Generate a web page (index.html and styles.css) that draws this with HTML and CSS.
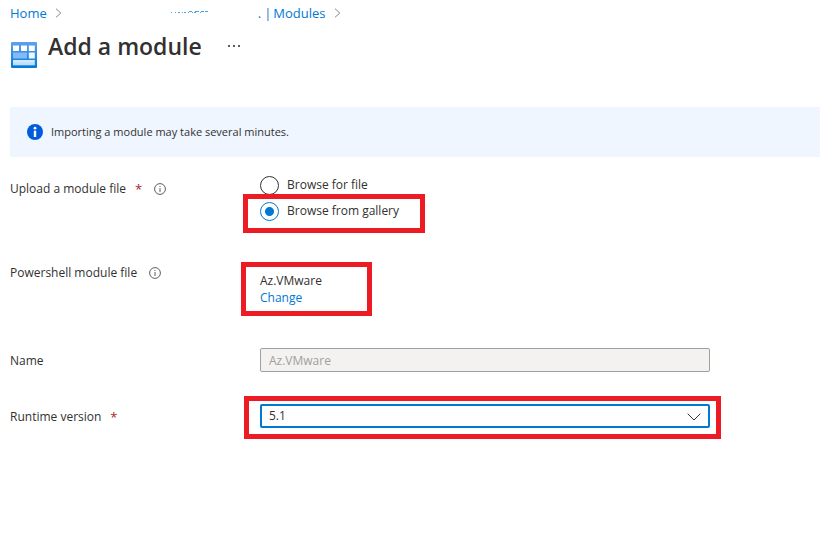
FILE: index.html
```html
<!DOCTYPE html>
<html lang="en">
<head>
<meta charset="utf-8">
<title>Add a module</title>
<link rel="stylesheet" href="styles.css">
</head>
<body>
<nav class="breadcrumb" aria-label="Breadcrumb">
  <a href="#">Home</a>
  <svg class="sep" viewBox="0 0 8 10" aria-hidden="true"><path d="M1 .7 5.8 5 1 9.3"/></svg>
  <a class="account" href="#">
    <svg class="redacted" viewBox="0 0 40 4" aria-hidden="true"><path d="M1 1.500h1M5 1.500h1M8 1.500h2M12 1.500h1M14 1.500h2M19 .5h3M18 1.500h1M22 1.500h1M25 .5h4M24 1.500h2M31 .5h3M30 1.500h1M35 .5h3"/></svg>
    <span>.</span><span class="bar">|</span><span>Modules</span>
  </a>
  <svg class="sep" viewBox="0 0 8 10" aria-hidden="true"><path d="M1 .7 5.8 5 1 9.3"/></svg>
</nav>
<header class="title">
  <svg class="title-icon" viewBox="0 0 26 26" aria-hidden="true">
    <defs><linearGradient id="tile" x1="0" y1="0" x2="0" y2="1"><stop offset="0" stop-color="#5ea0ef"/><stop offset="1" stop-color="#0078d4"/></linearGradient>
    <linearGradient id="pane" x1="0" y1="0" x2="0" y2="1"><stop offset="0" stop-color="#d2ebff"/><stop offset="1" stop-color="#b5dcfa"/></linearGradient></defs>
    <rect width="26" height="26" rx="1" fill="url(#tile)"/>
    <path fill="#fff" d="M2 3.500h6v5.500h-6zM10 3.500h6v5.500h-6zM17.800 3.500h6v5.500h-6z"/>
    <path fill="#83b9f9" d="M2 10.500h14v6h-14z"/>
    <path fill="#f0f8ff" d="M17.800 10.500h6v6h-6z"/>
    <path fill="url(#pane)" d="M2 18h21.800v5.300h-21.800z"/>
  </svg>
  <h1>Add a module</h1>
  <button class="more" type="button" aria-label="More"><svg viewBox="0 0 12 2" aria-hidden="true"><path d="M0 0h2v2H0zM5 0h2v2H5zM10 0h2v2h-2z"/></svg></button>
</header>
<main>
  <div class="banner" role="status">
    <svg viewBox="0 0 16 16" aria-hidden="true"><circle cx="8" cy="8" r="8" fill="#015cda"/><circle cx="8" cy="4.200" r="1.400" fill="#fff"/><path fill="#fff" d="M6.800 6.700h2.400v6.300H6.800z"/></svg>
    <span>Importing a module may take several minutes.</span>
  </div>
  <form>
    <div class="row tall" role="radiogroup" aria-labelledby="upload">
      <div class="label lowered"><span id="upload">Upload a module file</span><span class="required">*</span>
        <svg class="info" viewBox="0 0 12 12" aria-hidden="true"><circle cx="6" cy="6" r="5.400"/><path d="M6 5v4M6 3v1"/></svg></div>
      <div class="field">
        <label class="radio"><input type="radio" name="source"><span>Browse for file</span></label>
        <label class="radio"><input type="radio" name="source" checked><span>Browse from gallery</span></label>
        <span class="mark mark-gallery"></span>
      </div>
    </div>
    <div class="row tall">
      <div class="label"><span>Powershell module file</span>
        <svg class="info" viewBox="0 0 12 12" aria-hidden="true"><circle cx="6" cy="6" r="5.400"/><path d="M6 5v4M6 3v1"/></svg></div>
      <div class="field file">
        <span>Az.VMware</span><a href="#">Change</a>
        <span class="mark mark-file"></span>
      </div>
    </div>
    <div class="row">
      <label class="label" for="name">Name</label>
      <div class="field"><input class="box" id="name" type="text" value="Az.VMware" disabled></div>
    </div>
    <div class="row">
      <label class="label" for="runtime">Runtime version<span class="required">*</span></label>
      <div class="field">
        <select class="box" id="runtime"><option>5.1</option></select>
        <svg class="chevron" viewBox="0 0 14 8" aria-hidden="true"><path d="M.7.700 7 7 13.300.700"/></svg>
        <span class="mark mark-runtime"></span>
      </div>
    </div>
  </form>
</main>
</body>
</html>
```
FILE: styles.css
```css
* { box-sizing: border-box; }
body {
  margin: 0;
  padding-left: 10px;
  background: #fff;
  color: #323130;
  font: 12px/24px "Open Sans", "Noto Sans", sans-serif;
}
a { color: #0078d4; text-decoration: none; }
svg { display: block; flex: none; }

.breadcrumb { display: flex; align-items: center; height: 26px; font-size: 13px; }
.sep { width: 8px; height: 10px; margin-left: 8px; fill: none; stroke: #8a8886; }
.account { display: flex; align-items: center; margin-left: 107px; }
.redacted { width: 40px; height: 4px; margin-right: 48px; stroke: #4aa3e2; }
.bar { margin: 0 2px 0 3px; }

.title { display: flex; align-items: center; height: 40px; }
.title-icon { width: 26px; height: 26px; margin: 18px 11px 0 1px; }
h1 { margin: 0; font-size: 23px; font-weight: 600; line-height: 32px; }
.more { margin-left: 26px; padding: 0; border: 0; background: none; }
.more svg { width: 12px; height: 2px; fill: #605e5c; }

.banner {
  display: flex;
  align-items: center;
  gap: 8px;
  height: 50px;
  margin: 41px 0 15px;
  padding-left: 17px;
  border-radius: 2px 0 0 2px;
  background: #eff6ff;
  font-size: 11px;
}
.banner svg { width: 16px; height: 16px; }

.row { display: grid; grid-template-columns: 250px minmax(0, 450px); min-height: 56px; align-items: start; }
.tall { min-height: 88px; }
.label { display: flex; align-items: center; line-height: 26px; }
.lowered { padding-top: 4px; }
.required { margin-left: 9px; color: #a4262c; font-size: 13px; }
.info { width: 12px; height: 12px; margin-left: 12px; fill: none; stroke: #605e5c; }
.field { position: relative; }

.radio { display: flex; align-items: center; gap: 8px; width: max-content; height: 26px; line-height: 28px; }
.radio input {
  appearance: none;
  width: 19px;
  height: 19px;
  margin: 0;
  border: 1px solid #323130;
  border-radius: 50%;
}
.radio input:checked {
  border-color: #0078d4;
  background: radial-gradient(circle, #0078d4 4px, transparent 5px);
}

.file { display: flex; flex-direction: column; align-items: start; padding-top: 12px; line-height: 17px; }

.box {
  display: block;
  width: 100%;
  height: 24px;
  padding: 0 8px;
  border: 1px solid #a19f9d;
  border-radius: 2px;
  background: #f3f2f1;
  color: #a19f9d;
  font: inherit;
  line-height: 22px;
}
select.box {
  appearance: none;
  padding: 0 7px;
  border: 2px solid #0078d4;
  background: #fff;
  color: #323130;
  line-height: 20px;
}
.chevron { position: absolute; top: 9px; right: 9px; width: 14px; height: 8px; fill: none; stroke: #323130; pointer-events: none; }

.mark { position: absolute; border: 5px solid #ed1c24; pointer-events: none; }
.mark-gallery { top: 22px; left: -17px; width: 182px; height: 39px; }
.mark-file { top: 2px; left: -19px; width: 131px; height: 54px; }
.mark-runtime { inset: -8px -11px -11px -16px; }
```
